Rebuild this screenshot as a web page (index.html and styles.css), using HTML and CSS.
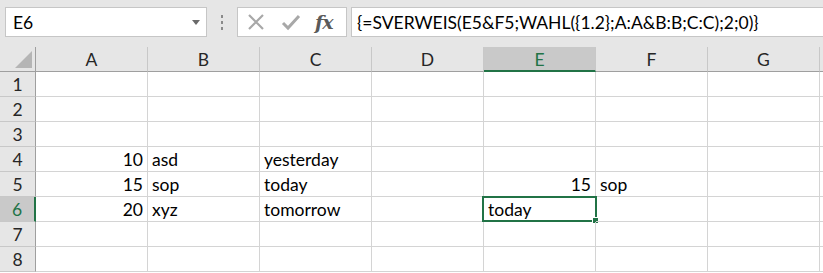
FILE: index.html
```html
<!DOCTYPE html>
<html>
<head>
    <meta charset="UTF-8">
    <title>Sheet</title>
    <link rel="stylesheet" href="styles.css">
</head>
<body>
    <div class="toolbar">
        <div class="name-box">
            <span>E6</span>
            <svg class="drop" width="8" height="5" viewBox="0 0 8 5"><path d="M0 0 L8 0 L4 5 Z" fill="#6a6a6a"/></svg>
        </div>
        <div class="grip"><i></i><i></i><i></i></div>
        <div class="fx-box">
            <svg width="18" height="18" viewBox="0 0 18 18"><path d="M2 2 L16 16 M16 2 L2 16" stroke="#a8a8a8" stroke-width="2.2" fill="none"/></svg>
            <svg width="20" height="18" viewBox="0 0 20 18"><path d="M2 10 L7 15 L18 3" stroke="#a8a8a8" stroke-width="3" fill="none"/></svg>
            <span class="fx">fx</span>
        </div>
        <div class="formula">{=SVERWEIS(E5&amp;F5;WAHL({1.2};A:A&amp;B:B;C:C);2;0)}</div>
    </div>

    <div class="sheet">
        <div class="corner">
            <svg width="18" height="17" viewBox="0 0 18 17"><path d="M17 0 L17 17 L0 17 Z" fill="#b5b5b5"/></svg>
        </div>
        <div class="col-head">A</div>
        <div class="col-head">B</div>
        <div class="col-head">C</div>
        <div class="col-head">D</div>
        <div class="col-head active">E</div>
        <div class="col-head">F</div>
        <div class="col-head">G</div>
        <div class="col-head edge"></div>
    </div>

    <script>
        const rows = {
            4: ['10', 'asd', 'yesterday', '', '', '', ''],
            5: ['15', 'sop', 'today', '', '15', 'sop', ''],
            6: ['20', 'xyz', 'tomorrow', '', 'today', '', '']
        };
        const numeric = { '4-0': 1, '5-0': 1, '6-0': 1, '5-4': 1 };
        const sheet = document.querySelector('.sheet');

        for (let r = 1; r <= 8; r++) {
            const head = document.createElement('div');
            head.className = 'row-head' + (r === 6 ? ' active' : '');
            head.textContent = r;
            sheet.appendChild(head);

            const values = rows[r] || ['', '', '', '', '', '', ''];
            values.forEach((v, c) => {
                const cell = document.createElement('div');
                cell.className = 'cell' + (numeric[r + '-' + c] ? ' num' : '');
                cell.textContent = v;
                if (r === 6 && c === 4) {
                    const sel = document.createElement('div');
                    sel.className = 'selection';
                    sel.innerHTML = '<span class="handle"></span>';
                    cell.appendChild(sel);
                }
                sheet.appendChild(cell);
            });

            const edge = document.createElement('div');
            edge.className = 'cell edge';
            sheet.appendChild(edge);
        }
    </script>
</body>
</html>
```

FILE: styles.css
```css
* {
    margin: 0;
    padding: 0;
    box-sizing: border-box;
}

body {
    font-family: Lato, "Open Sans", sans-serif;
    font-size: 17.5px;
    color: #000;
    background: #fff;
    width: 823px;
    height: 273px;
    overflow: hidden;
}

.toolbar {
    height: 47px;
    background: #e6e6e6;
    display: flex;
    align-items: flex-start;
    padding: 7px 0 0 5px;
}

.name-box {
    width: 202px;
    height: 30px;
    background: #fff;
    border: 1px solid #c6c6c6;
    display: flex;
    align-items: center;
    justify-content: space-between;
    padding: 0 6px 0 7px;
}

.grip {
    width: 30px;
    height: 30px;
    display: flex;
    flex-direction: column;
    align-items: center;
    justify-content: center;
    gap: 3px;
}

.grip i {
    width: 2px;
    height: 3px;
    background: #8a8a8a;
}

.fx-box {
    width: 110px;
    height: 30px;
    background: #fff;
    border: 1px solid #c6c6c6;
    display: flex;
    align-items: center;
    gap: 16px;
    padding-left: 9px;
}

.fx {
    font-family: "DejaVu Serif", "Liberation Serif", serif;
    font-style: italic;
    font-weight: bold;
    font-size: 19px;
    color: #5a5a5a;
    margin-left: -2px;
    letter-spacing: -1px;
}

.formula {
    flex: 1;
    height: 30px;
    margin-left: 4px;
    background: #fff;
    border: 1px solid #c6c6c6;
    border-right: none;
    display: flex;
    align-items: center;
    padding-left: 5px;
    white-space: nowrap;
}

.sheet {
    display: grid;
    grid-template-columns: 36px repeat(7, 112px) 3px;
    grid-template-rows: 25px repeat(8, 25px);
}

.corner {
    background: #e6e6e6;
    border-right: 1px solid #9f9f9f;
    border-bottom: 1px solid #9f9f9f;
    display: flex;
    align-items: flex-end;
    justify-content: flex-end;
    padding: 0 2px 3px 0;
}

.col-head {
    background: #e6e6e6;
    border-right: 1px solid #c8c8c8;
    border-bottom: 1px solid #9f9f9f;
    display: flex;
    align-items: center;
    justify-content: center;
    color: #262626;
    padding-top: 1px;
}

.col-head.active {
    background: #c9c9c9;
    color: #217346;
    border-bottom: 2px solid #217346;
}

.col-head.edge {
    border-right: none;
}

.row-head {
    background: #e6e6e6;
    border-right: 1px solid #9f9f9f;
    border-bottom: 1px solid #c8c8c8;
    display: flex;
    align-items: center;
    justify-content: center;
    color: #262626;
}

.row-head.active {
    background: #c9c9c9;
    color: #217346;
    border-right: 2px solid #217346;
}

.cell {
    position: relative;
    border-right: 1px solid #d4d4d4;
    border-bottom: 1px solid #d4d4d4;
    display: flex;
    align-items: flex-end;
    padding: 0 4px 1px 4px;
    white-space: nowrap;
}

.cell.num {
    justify-content: flex-end;
}

.cell.edge {
    border-right: none;
    padding: 0;
}

.selection {
    position: absolute;
    top: -1px;
    left: -2px;
    right: -2px;
    bottom: -1px;
    border: 2px solid #217346;
}

.handle {
    position: absolute;
    right: -4px;
    bottom: -4px;
    width: 7px;
    height: 7px;
    background: #217346;
    border: 1px solid #fff;
}
```
